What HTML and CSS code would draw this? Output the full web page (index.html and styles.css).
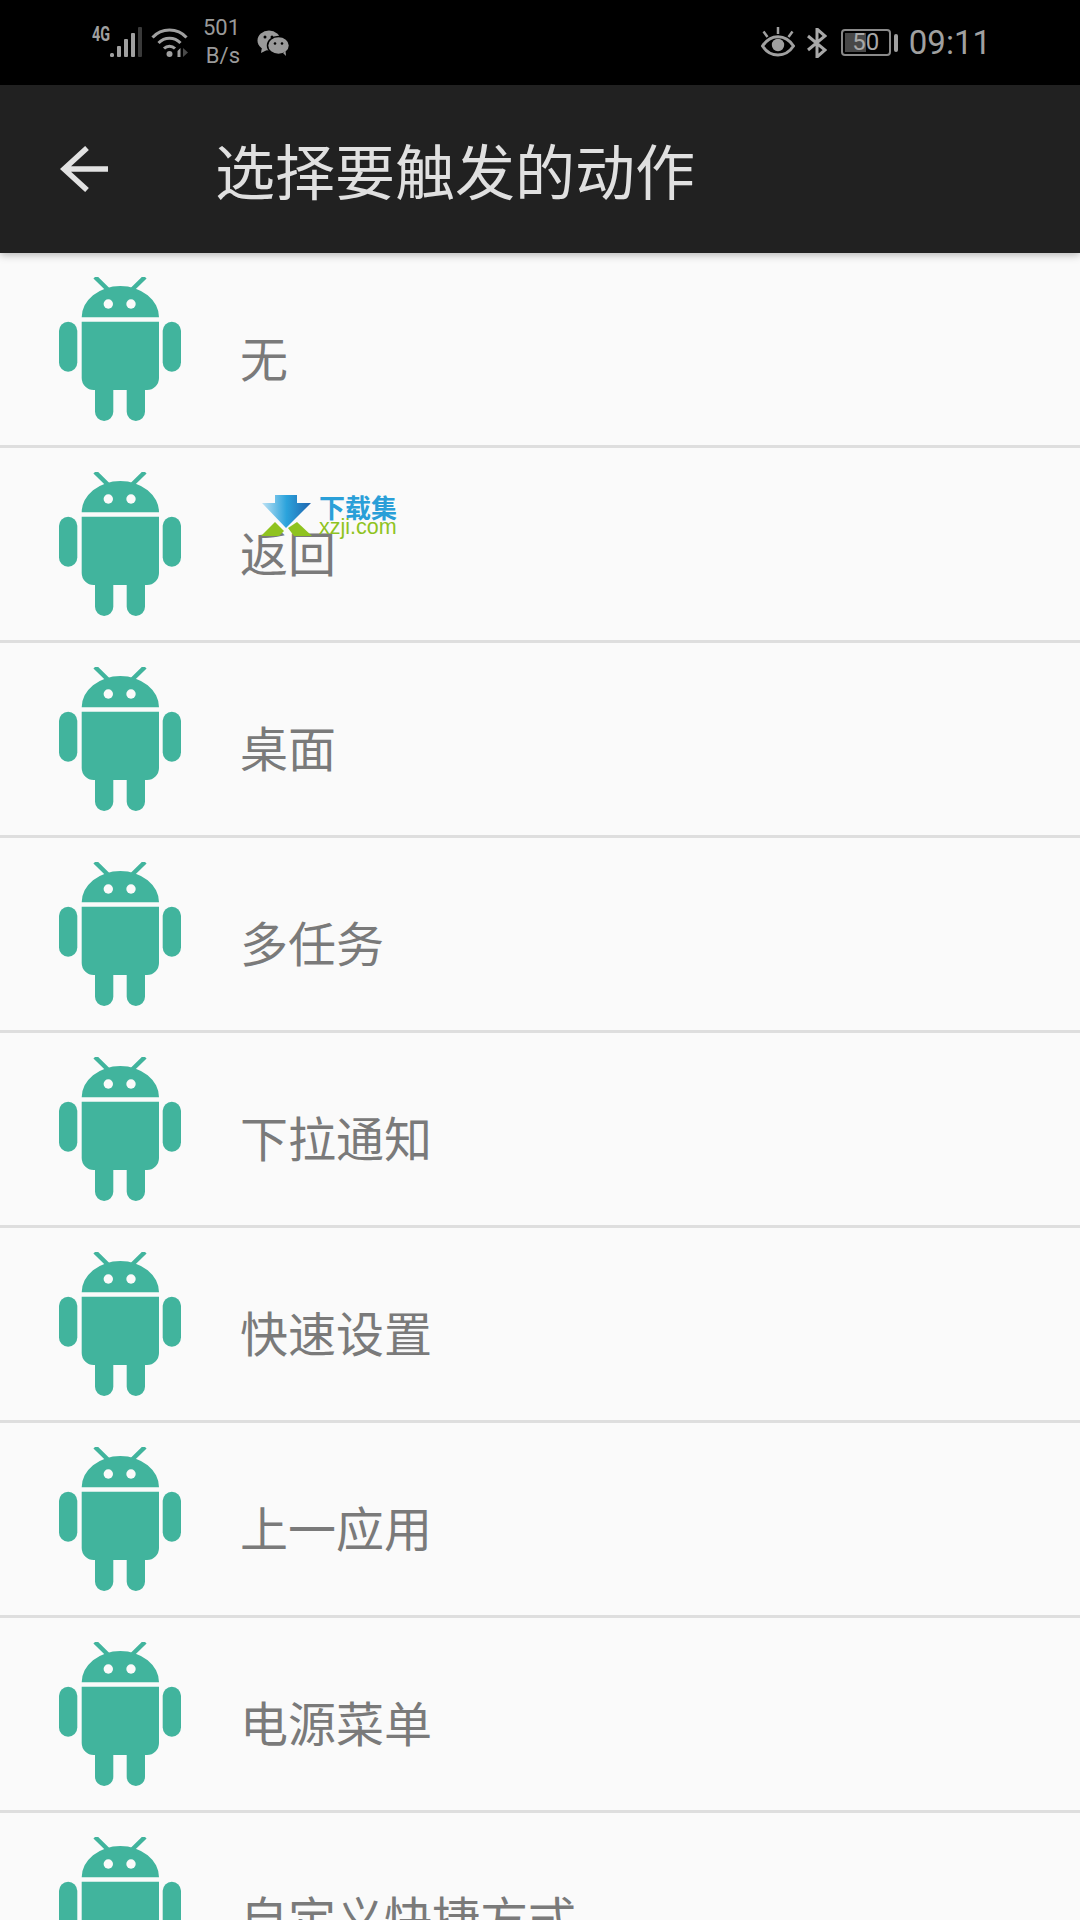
FILE: index.html
```html
<!DOCTYPE html>
<html lang="zh">
<head>
<meta charset="utf-8">
<title>选择要触发的动作</title>
<link rel="stylesheet" href="styles.css">
</head>
<body>
<svg class="defs" width="0" height="0" aria-hidden="true">
  <symbol id="android" viewBox="0 0 144 144">
    <g fill="#41b49d">
      <path d="M33.700 40.300A38.650 31.300 0 0 1 111 40.300Z"/>
      <path d="M33.700 44.700H111V101a12 12 0 0 1-12 12H97V134.800a9.150 9.150 0 0 1-18.300 0V113H65.300V134.800a9.150 9.150 0 0 1-18.300 0V113H45.700a12 12 0 0 1-12-12Z"/>
      <rect x="11" y="44.700" width="18.300" height="50" rx="9.150"/>
      <rect x="114.700" y="44.700" width="18.300" height="50" rx="9.150"/>
    </g>
    <path d="M47 0 60.300 13M97 0 83.700 13" stroke="#41b49d" stroke-width="4.500" fill="none"/>
    <circle cx="60.300" cy="27" r="4.700" fill="#fafafa"/>
    <circle cx="83" cy="27" r="4.700" fill="#fafafa"/>
  </symbol>
</svg>

<div class="screen">
  <header class="status">
    <div class="status-left">
      <span class="net">4G</span>
      <svg class="ic-signal" viewBox="0 0 32 30" width="32" height="30">
        <rect x="0" y="26" width="4" height="4" rx="1.500" fill="#a0a0a0"/>
        <rect x="7" y="19" width="4" height="11" rx="1" fill="#a0a0a0"/>
        <rect x="14" y="12" width="4" height="18" rx="1" fill="#a0a0a0"/>
        <rect x="21" y="6" width="4" height="24" rx="1" fill="#a0a0a0"/>
        <rect x="28" y="0" width="4" height="30" rx="1" fill="#3a3a3a"/>
      </svg>
      <svg class="ic-wifi" viewBox="0 0 37 30" width="37" height="30">
        <path d="M1.500 10.500C10.500 .5 26.500 .5 35.500 10.500M7.500 16C13.500 9.500 23.500 9.500 29.500 16M13 21.500C16 18.500 21 18.500 24 21.500" fill="none" stroke="#a0a0a0" stroke-width="3"/>
        <circle cx="18.500" cy="27" r="3" fill="#a0a0a0"/>
        <path d="M26.500 30V24l3-3v9Z" fill="#a0a0a0"/>
        <path d="M32 21v9l5-4.500Z" fill="#4a4a4a"/>
      </svg>
      <div class="speed"><span>501</span><span>B/s</span></div>
      <svg class="ic-wechat" viewBox="0 0 32 26" width="32" height="26">
        <ellipse cx="12" cy="10.500" rx="11.500" ry="10" fill="#9a9a9a"/>
        <path d="M5 17l-1 6 6-3Z" fill="#9a9a9a"/>
        <ellipse cx="21.500" cy="15.500" rx="11" ry="9" fill="#9a9a9a" stroke="#000" stroke-width="1.500"/>
        <path d="M26 23l3 3-.5-5Z" fill="#9a9a9a"/>
        <circle cx="8" cy="7" r="1.500" fill="#000"/>
        <circle cx="15" cy="7" r="1.500" fill="#000"/>
        <circle cx="18" cy="13.500" r="1.300" fill="#000"/>
        <circle cx="25" cy="13.500" r="1.300" fill="#000"/>
      </svg>
    </div>
    <div class="status-right">
      <svg class="ic-eye" viewBox="0 0 34 30" width="34" height="30">
        <path d="M1.500 19C9.500 6.500 24.500 6.500 32.500 19C24.500 31 9.500 31 1.500 19Z" fill="none" stroke="#a0a0a0" stroke-width="3"/>
        <circle cx="17" cy="18" r="6.200" fill="#a0a0a0"/>
        <path d="M17 0V7M2.500 4.500 6.500 10M31.500 4.500 27.500 10" stroke="#a0a0a0" stroke-width="2.500" fill="none"/>
      </svg>
      <svg class="ic-bt" viewBox="0 0 20 30" width="20" height="30">
        <path d="M1 8 18 22 10 29V1L18 8 1 22" fill="none" stroke="#a8a8a8" stroke-width="3"/>
      </svg>
      <div class="battery">
        <div class="battery-body">
          <div class="battery-fill"></div>
          <span class="battery-num">50</span>
        </div>
        <div class="battery-nub"></div>
      </div>
      <span class="clock">09:11</span>
    </div>
  </header>

  <div class="toolbar">
    <svg class="ic-back" viewBox="0 0 48 46" width="48" height="46">
      <path d="M48 23H4M27 2 4 23 27 44" fill="none" stroke="#e2e2e2" stroke-width="5.500"/>
    </svg>
    <h1 class="title">选择要触发的动作</h1>
  </div>

  <ul class="list">
    <li class="row"><svg class="robot"><use href="#android"/></svg><span class="label">无</span></li>
    <li class="row"><svg class="robot"><use href="#android"/></svg><span class="label">返回</span></li>
    <li class="row"><svg class="robot"><use href="#android"/></svg><span class="label">桌面</span></li>
    <li class="row"><svg class="robot"><use href="#android"/></svg><span class="label">多任务</span></li>
    <li class="row"><svg class="robot"><use href="#android"/></svg><span class="label">下拉通知</span></li>
    <li class="row"><svg class="robot"><use href="#android"/></svg><span class="label">快速设置</span></li>
    <li class="row"><svg class="robot"><use href="#android"/></svg><span class="label">上一应用</span></li>
    <li class="row"><svg class="robot"><use href="#android"/></svg><span class="label">电源菜单</span></li>
    <li class="row"><svg class="robot"><use href="#android"/></svg><span class="label">自定义快捷方式</span></li>
  </ul>

  <div class="watermark">
    <svg class="wm-mark" viewBox="0 0 52 42" width="52" height="42">
      <defs>
        <linearGradient id="wmblue" x1="0" x2="1" y1="0" y2="0">
          <stop offset="0" stop-color="#bfe3f5"/>
          <stop offset=".5" stop-color="#2ba3dc"/>
          <stop offset="1" stop-color="#1f64ae"/>
        </linearGradient>
      </defs>
      <path d="M14 0H36V8H50L25 33 1 8H14Z" fill="url(#wmblue)"/>
      <path d="M0 41 14 27 23 36 18 41Z" fill="#8fc31f"/>
      <path d="M27 33 36 27 51 41H33Z" fill="#8fc31f"/>
    </svg>
    <div class="wm-text">
      <span class="wm-cn">下载集</span>
      <span class="wm-en">xzji.com</span>
    </div>
  </div>
</div>
</body>
</html>
```

FILE: styles.css
```css
* { box-sizing: border-box; }
html, body { margin: 0; padding: 0; }
body {
  width: 1080px;
  height: 1920px;
  overflow: hidden;
  background: #fafafa;
  font-family: "Noto Sans CJK SC", "Noto Sans", sans-serif;
}
.defs { display: block; height: 0; }
.screen { position: relative; width: 1080px; height: 1920px; overflow: hidden; }

.status {
  height: 85px;
  background: #000;
  display: flex;
  align-items: center;
  justify-content: space-between;
  padding: 0 89px 0 92px;
  color: #a0a0a0;
  font-family: Roboto, sans-serif;
}
.status-left, .status-right { display: flex; align-items: center; }
.status-left { height: 85px; }
.net { font-size: 20px; font-weight: 700; width: 18px; margin-top: -17px; transform: scaleX(.72); transform-origin: left center; white-space: nowrap; }
.ic-signal { margin-top: -1px; }
.ic-wifi { margin-left: 9px; margin-top: -1px; }
.speed { display: flex; flex-direction: column; align-items: flex-end; width: 37px; margin-left: 15px; font-size: 22px; line-height: 28px; margin-top: -1px; color: #9a9a9a; }
.ic-wechat { margin-left: 17px; margin-top: 1px; }
.ic-eye { margin-top: -1px; }
.ic-bt { margin-left: 12px; margin-top: 1px; }
.battery { display: flex; align-items: center; margin-left: 14px; }
.battery-body { position: relative; width: 50px; height: 27px; border: 2px solid #8a8a8a; border-radius: 4px; display: flex; align-items: center; justify-content: center; }
.battery-fill { position: absolute; left: 2px; top: 2px; bottom: 2px; width: 21px; background: #484848; }
.battery-num { position: relative; font-size: 24px; line-height: 23px; color: #a8a8a8; }
.battery-nub { width: 4px; height: 18px; margin-left: 3px; background: #a0a0a0; border-radius: 2px; }
.clock { margin-left: 11px; font-size: 33px; line-height: 40px; color: #a0a0a0; }

.toolbar {
  position: relative;
  height: 168px;
  background: #212121;
  display: flex;
  align-items: center;
  padding-left: 60px;
  box-shadow: 0 2px 8px rgba(0, 0, 0, .28);
}
.title { margin: 0 0 0 107px; font-size: 60px; font-weight: 400; line-height: 80px; color: #e0e0e0; white-space: nowrap; }

.list { list-style: none; margin: 0; padding: 0; }
.row {
  height: 195px;
  padding-left: 48px;
  display: flex;
  align-items: center;
  border-bottom: 3px solid #dedede;
}
.robot { width: 144px; height: 144px; flex: none; }
.label { margin-left: 48px; padding-top: 13px; font-size: 48px; line-height: 64px; color: #7a7a7a; white-space: nowrap; }

.watermark { position: absolute; left: 261px; top: 495px; display: flex; gap: 6px; }
.wm-mark { flex: none; }
.wm-text { display: flex; flex-direction: column; }
.wm-cn { font-size: 26px; line-height: 24px; font-weight: 700; color: #2a9fd8; }
.wm-en { font-family: "Liberation Sans", sans-serif; font-size: 21.500px; line-height: 16px; color: #8fc31f; }
```
